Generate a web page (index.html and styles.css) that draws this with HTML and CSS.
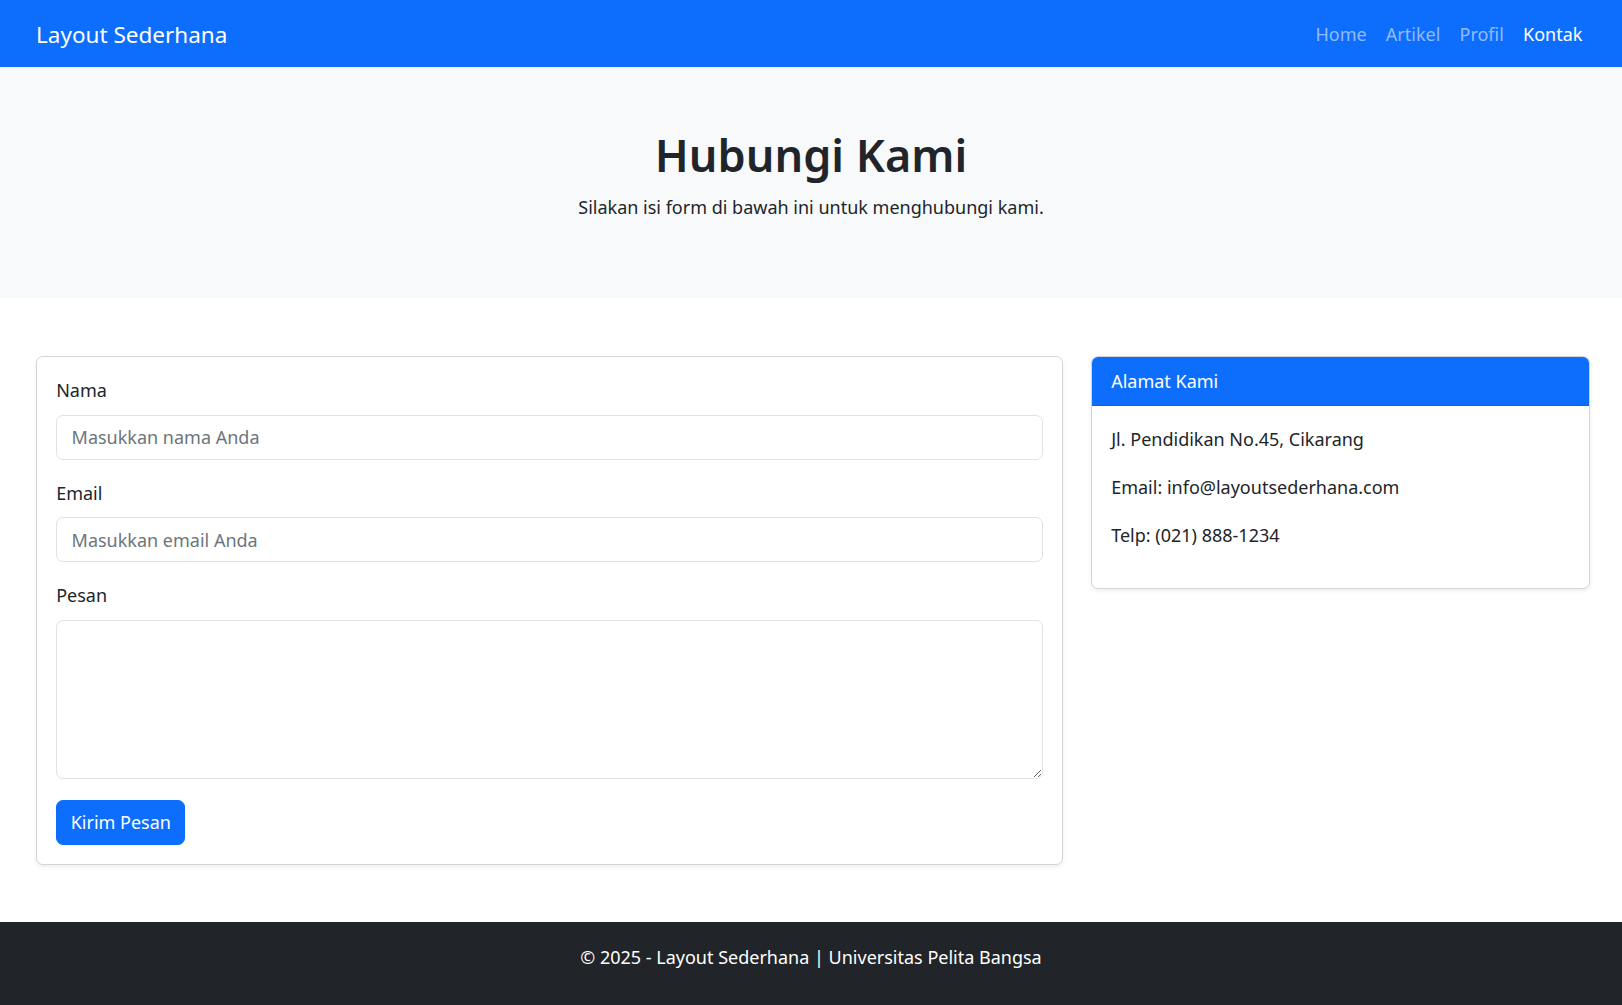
FILE: index.html
```html
<!DOCTYPE html>
<html lang="id">
<head>
<meta charset="utf-8">
<title>Kontak - Layout Sederhana</title>
<link rel="stylesheet" href="styles.css">
</head>
<body>
<nav class="navbar">
  <a class="brand" href="#">Layout Sederhana</a>
  <ul class="nav">
    <li><a class="nav-link" href="#">Home</a></li>
    <li><a class="nav-link" href="#">Artikel</a></li>
    <li><a class="nav-link" href="#">Profil</a></li>
    <li><a class="nav-link active" href="#">Kontak</a></li>
  </ul>
</nav>

<header class="hero">
  <h1 class="hero-title">Hubungi Kami</h1>
  <p class="hero-sub">Silakan isi form di bawah ini untuk menghubungi kami.</p>
</header>

<main class="main">
  <section class="card form-card">
    <form class="card-body">
      <div class="field">
        <label class="label" for="nama">Nama</label>
        <input class="control" id="nama" type="text" placeholder="Masukkan nama Anda">
      </div>
      <div class="field">
        <label class="label" for="email">Email</label>
        <input class="control" id="email" type="email" placeholder="Masukkan email Anda">
      </div>
      <div class="field field-last">
        <label class="label" for="pesan">Pesan</label>
        <textarea class="control textarea" id="pesan" rows="5"></textarea>
      </div>
      <button class="btn" type="button">Kirim Pesan</button>
    </form>
  </section>

  <aside class="card info-card">
    <div class="card-header">Alamat Kami</div>
    <div class="card-body">
      <p class="info">Jl. Pendidikan No.45, Cikarang</p>
      <p class="info">Email: info@layoutsederhana.com</p>
      <p class="info">Telp: (021) 888-1234</p>
    </div>
  </aside>
</main>

<footer class="footer">
  <p class="footer-text">© 2025 - Layout Sederhana | Universitas Pelita Bangsa</p>
</footer>
</body>
</html>
```

FILE: styles.css
```css
* { box-sizing: border-box; }

html, body {
  margin: 0;
  padding: 0;
}

body {
  font-family: "Noto Sans", "Open Sans", "Liberation Sans", sans-serif;
  font-size: 18px;
  line-height: 28.8px;
  color: #212529;
  background: #fff;
}

/* Navbar */
.navbar {
  height: 67px;
  background: #0d6efd;
  display: flex;
  align-items: center;
  justify-content: space-between;
  padding: 0 30px 0 36px;
}

.brand {
  color: #fff;
  text-decoration: none;
  font-size: 22.5px;
  line-height: 36px;
  padding-top: 2px;
}

.nav {
  list-style: none;
  margin: 0;
  padding: 0;
  display: flex;
}

.nav-link {
  display: block;
  padding: 7px 9.6px 5px;
  color: rgba(255, 255, 255, 0.55);
  text-decoration: none;
  font-size: 18px;
}

.nav-link.active {
  color: #fff;
}

/* Hero */
.hero {
  background: #f8f9fa;
  padding: 59px 0 56px;
  text-align: center;
  height: 231px;
}

.hero-title {
  margin: 0 0 9.6px;
  font-size: 45px;
  line-height: 57.6px;
  font-weight: 600;
}

.hero-sub {
  margin: 0 0 19.2px;
  font-size: 18px;
}

/* Main */
.main {
  display: grid;
  grid-template-columns: 1027px 499px;
  column-gap: 28px;
  align-items: start;
  padding: 58px 32px 57px 36px;
}

.card {
  background: #fff;
  border: 1px solid #d3d6d9;
  border-radius: 7px;
  box-shadow: 0 2px 4px rgba(0, 0, 0, 0.075);
  overflow: hidden;
}

.card-body {
  padding: 19.2px;
}

.field {
  margin-bottom: 19.2px;
}

.field-last {
  margin-bottom: 21.5px;
}

.label {
  display: block;
  margin-bottom: 9.6px;
}

.control {
  display: block;
  width: 100%;
  height: 45px;
  padding: 7px 14.4px;
  font: inherit;
  font-size: 18px;
  color: #212529;
  background: #fff;
  border: 1px solid #dee2e6;
  border-radius: 7px;
  outline: none;
}

.control::placeholder {
  color: #6c757d;
}

.textarea {
  height: 159px;
  resize: vertical;
}

.btn {
  display: inline-block;
  height: 45px;
  padding: 0 13.5px;
  font: inherit;
  font-size: 18px;
  color: #fff;
  background: #0d6efd;
  border: 1px solid #0d6efd;
  border-radius: 7px;
  cursor: pointer;
}

.form-card .card-body {
  padding: 19.2px 19.2px 18.5px;
}

.card-header {
  background: #0d6efd;
  color: #fff;
  height: 49px;
  padding: 0 19.2px;
  display: flex;
  align-items: center;
  border-bottom: 1px solid rgba(0, 0, 0, 0.1);
}

.info-card .card-body {
  padding: 19.2px 19.2px 19.2px;
}

.info {
  margin: 0 0 19.2px;
}

/* Footer */
.footer {
  background: #212529;
  color: #fff;
  text-align: center;
  padding: 21px 0 36px;
}

.footer-text {
  margin: 0;
}
```
